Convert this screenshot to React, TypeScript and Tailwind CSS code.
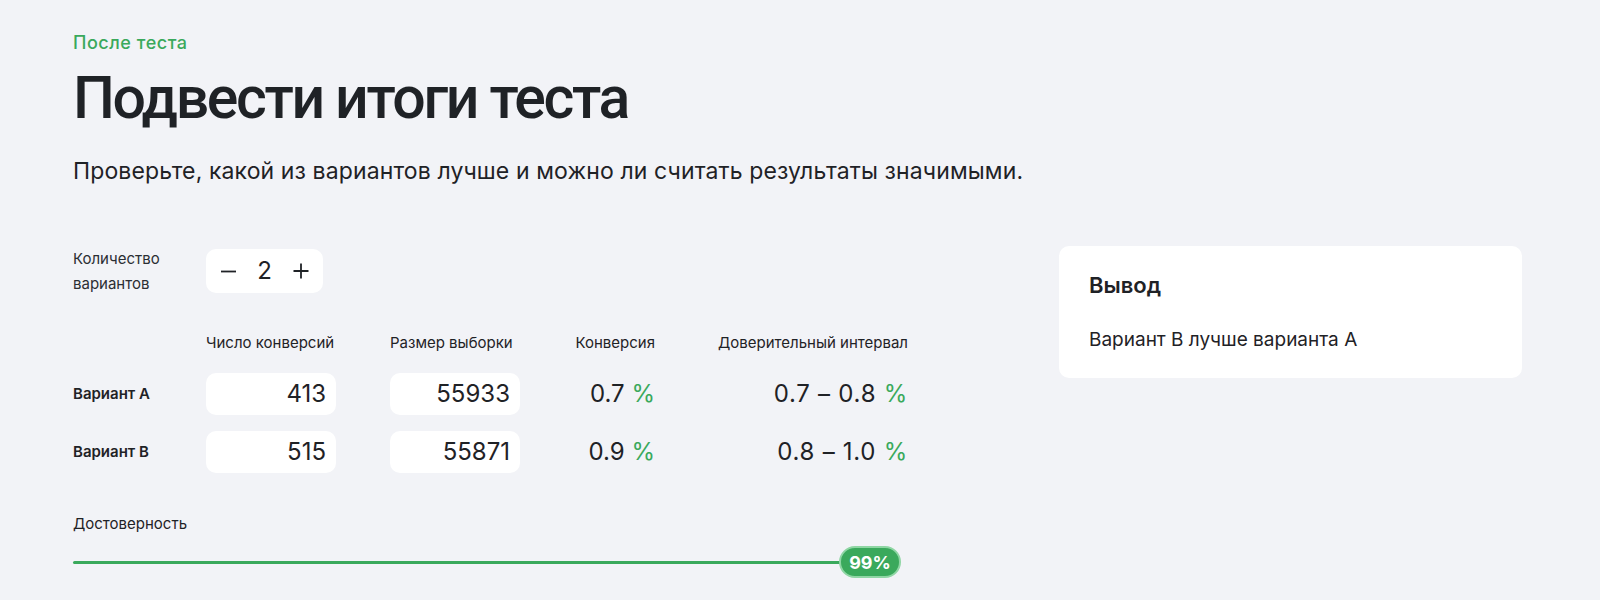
import React from "react";

const rows = [
  { name: "Вариант A", conversions: "413", sample: "55933", rate: "0.7", interval: "0.7 – 0.8" },
  { name: "Вариант B", conversions: "515", sample: "55871", rate: "0.9", interval: "0.8 – 1.0" },
];

const cols = "grid grid-cols-[133px_184px_130px_135px_253px] items-center";

export default function App() {
  return (
    <div className="min-h-screen bg-[#f2f3f7] font-['Inter',sans-serif] text-[#1f2226]">
      <div className="pl-[73px] pr-[78px] pt-[31px]">
        <p className="text-[18px] leading-[24px] font-medium tracking-[0.03em] text-[#3aa95c]">После теста</p>
        <h1 className="mt-[13px] font-['Roboto',sans-serif] text-[59px] leading-[60px] font-medium tracking-[-0.04em]">
          Подвести итоги теста
        </h1>
        <p className="mt-[28px] text-[23px] leading-[30px] tracking-[0.005em]">
          Проверьте, какой из вариантов лучше и можно ли считать результаты значимыми.
        </p>

        <div className="mt-[60px] flex items-start">
          {/* calculator */}
          <div className="w-[834px]">
            <div className="flex items-center">
              <div className="w-[133px] text-[15px] leading-[25px] text-[#2b2e33]">
                Количество
                <br />
                вариантов
              </div>
              <div className="flex h-[44px] w-[117px] items-center justify-between rounded-[10px] bg-white px-[13px] text-[24px]">
                <button className="flex h-[18px] w-[18px] items-center justify-center">
                  <svg width="17" height="17" viewBox="0 0 17 17">
                    <path d="M1 8.5h15" stroke="#1f2226" strokeWidth="1.8" />
                  </svg>
                </button>
                <span>2</span>
                <button className="flex h-[18px] w-[18px] items-center justify-center">
                  <svg width="16" height="16" viewBox="0 0 16 16">
                    <path d="M0.5 8h15M8 0.5v15" stroke="#1f2226" strokeWidth="1.8" />
                  </svg>
                </button>
              </div>
            </div>

            <div className={`mt-[37px] ${cols} text-[15px] leading-[20px]`}>
              <div />
              <div>Число конверсий</div>
              <div>Размер выборки</div>
              <div className="text-right">Конверсия</div>
              <div className="text-right">Доверительный интервал</div>
            </div>

            <div className={`mt-[20px] ${cols} gap-y-[16px]`}>
              {rows.map((r) => (
                <React.Fragment key={r.name}>
                  <div className="text-[15px] font-semibold">{r.name}</div>
                  <div className="flex h-[42px] w-[130px] items-center justify-end rounded-[10px] bg-white pr-[10px] text-[24px]">
                    {r.conversions}
                  </div>
                  <div className="flex h-[42px] w-[130px] items-center justify-end rounded-[10px] bg-white pr-[10px] text-[24px]">
                    {r.sample}
                  </div>
                  <div className="text-right text-[24px]">
                    {r.rate} <span className="text-[#3aa95c]">%</span>
                  </div>
                  <div className="text-right text-[24px] tracking-[0.03em]">
                    {r.interval} <span className="text-[#3aa95c]">%</span>
                  </div>
                </React.Fragment>
              ))}
            </div>

            <div className="mt-[41px] text-[15px] leading-[20px]">Достоверность</div>
            <div className="mt-[12px] flex h-[32px] items-center">
              <div className="h-[3px] w-[770px] rounded-full bg-[#3aa95c]" />
              <div className="-ml-[4px] flex h-[32px] w-[62px] items-center justify-center rounded-full border-2 border-[#8fd6a4] bg-[#3aa95c] text-[18px] font-bold text-white">
                99%
              </div>
            </div>
          </div>

          {/* result */}
          <div className="ml-auto w-[463px] rounded-[10px] bg-white px-[30px] pt-[25px] pb-[25px]">
            <h2 className="text-[22px] leading-[28px] font-semibold">Вывод</h2>
            <p className="mt-[28px] text-[19px] leading-[26px]">Вариант B лучше варианта A</p>
          </div>
        </div>
      </div>
    </div>
  );
}
